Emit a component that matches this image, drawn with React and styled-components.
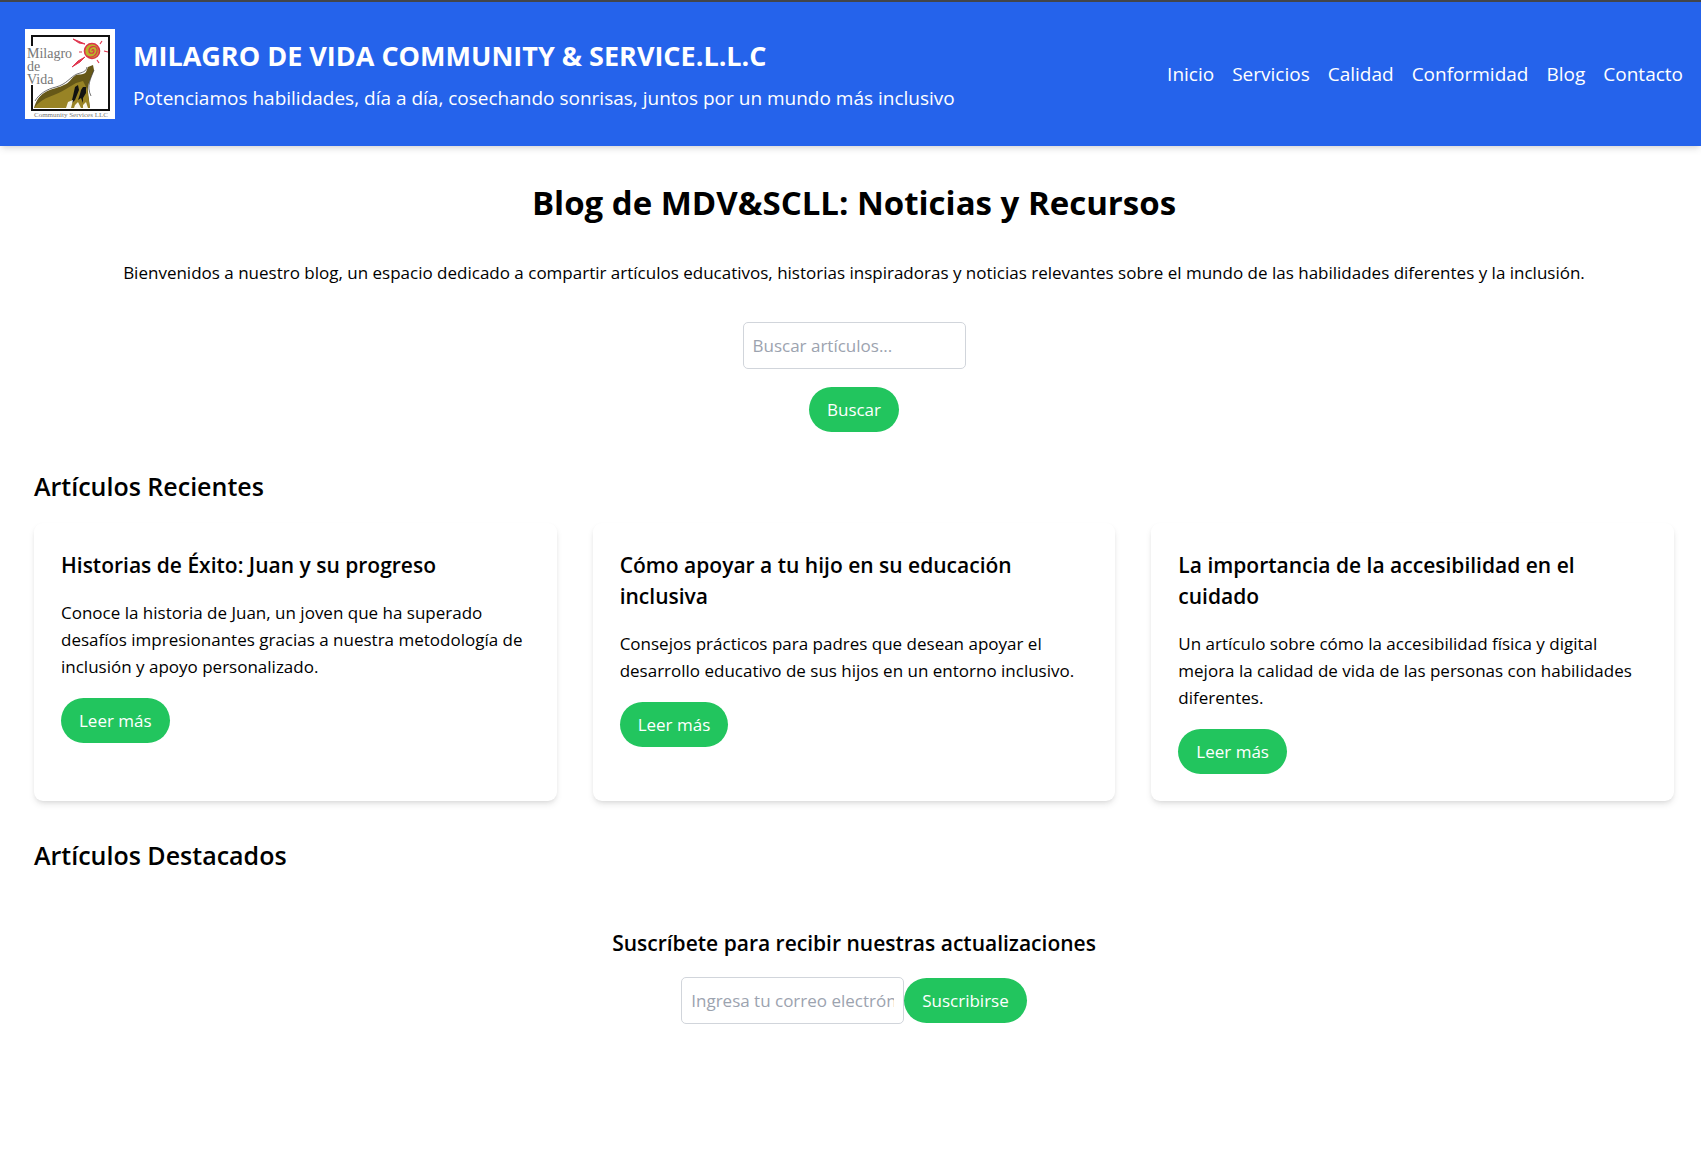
import React from "react";
import styled, { createGlobalStyle } from "styled-components";

const GlobalStyle = createGlobalStyle`
  *, *::before, *::after { box-sizing: border-box; }
  body {
    margin: 0;
    background: #fff;
    color: #000;
    font-family: "Open Sans", "Noto Sans", sans-serif;
    font-size: 17px;
    line-height: 27px;
  }
  h1, h2, h3, p, ul { margin: 0; padding: 0; }
  button, input { font: inherit; }
`;

const Header = styled.header`
  display: flex;
  align-items: center;
  justify-content: space-between;
  gap: 36px;
  padding: 27px 18px 27px 25px;
  border-top: 2px solid #424549;
  background: #2563eb;
  color: #fff;
  box-shadow: 0 4px 7px -1px rgba(0, 0, 0, 0.1), 0 2px 5px -2px rgba(0, 0, 0, 0.1);
`;

const Brand = styled.div`
  display: flex;
  align-items: center;
  gap: 18px;
`;

const Logo = styled.svg`
  flex: none;
  width: 90px;
  height: 90px;
  background: #fff;
`;

const BrandText = styled.div`
  display: grid;
  gap: 9px;
  padding-top: 2px;
`;

const BrandName = styled.h1`
  font-size: 27px;
  font-weight: 700;
  line-height: 37px;
`;

const Slogan = styled.p`
  font-size: 19px;
  line-height: 31px;
`;

const NavList = styled.ul`
  display: flex;
  gap: 18px;
  list-style: none;
`;

const NavLink = styled.a`
  color: inherit;
  font-size: 19px;
  line-height: 31px;
  text-decoration: none;
`;

const Main = styled.main`
  display: grid;
  gap: 36px;
  padding: 36px 27px 36px 34px;
`;

const PageTitle = styled.h2`
  font-size: 33px;
  font-weight: 700;
  line-height: 41px;
  text-align: center;
`;

const Intro = styled.p`
  text-align: center;
`;

const SearchForm = styled.form`
  display: flex;
  flex-direction: column;
  align-items: center;
  gap: 18px;
`;

const Field = styled.input`
  width: 223px;
  height: 47px;
  padding: 9px;
  border: 1px solid #d1d5db;
  border-radius: 5px;
  background: #fff;
  color: #000;
  &::placeholder { color: #9ca3af; opacity: 1; }
`;

const PillButton = styled.button`
  padding: 9px 18px;
  border: 0;
  border-radius: 23px;
  background: #22c55e;
  color: #fff;
  cursor: pointer;
`;

const Section = styled.section`
  display: grid;
  gap: 18px;
`;

const SectionTitle = styled.h2`
  font-size: 25px;
  font-weight: 600;
  line-height: 37px;
`;

const Cards = styled.div`
  display: grid;
  grid-template-columns: repeat(3, minmax(0, 1fr));
  gap: 36px;
`;

const Card = styled.article`
  display: flex;
  flex-direction: column;
  align-items: flex-start;
  gap: 18px;
  padding: 27px;
  border-radius: 9px;
  background: #fff;
  box-shadow: 0 4px 7px -1px rgba(0, 0, 0, 0.1), 0 2px 5px -2px rgba(0, 0, 0, 0.1);
`;

const Subtitle = styled.h3`
  font-size: 21px;
  font-weight: 600;
  line-height: 31px;
`;

const Subscribe = styled.section`
  display: flex;
  flex-direction: column;
  align-items: center;
  gap: 18px;
  padding-top: 18px;
`;

const SubscribeForm = styled.form`
  display: flex;
  align-items: center;
`;

const links = ["Inicio", "Servicios", "Calidad", "Conformidad", "Blog", "Contacto"];

const articles = [
  {
    title: "Historias de Éxito: Juan y su progreso",
    text: "Conoce la historia de Juan, un joven que ha superado desafíos impresionantes gracias a nuestra metodología de inclusión y apoyo personalizado.",
  },
  {
    title: "Cómo apoyar a tu hijo en su educación inclusiva",
    text: "Consejos prácticos para padres que desean apoyar el desarrollo educativo de sus hijos en un entorno inclusivo.",
  },
  {
    title: "La importancia de la accesibilidad en el cuidado",
    text: "Un artículo sobre cómo la accesibilidad física y digital mejora la calidad de vida de las personas con habilidades diferentes.",
  },
];

function BrandLogo() {
  return (
    <Logo viewBox="0 0 90 90" role="img" aria-label="Milagro de Vida">
      <path d="M7 17V7H84V81H7V56" fill="none" stroke="#111" strokeWidth="2" />
      <g fill="#777" fontFamily="'Liberation Serif', serif" fontSize="14">
        <text x="2" y="29">Milagro</text>
        <text x="2" y="42">de</text>
        <text x="2" y="55">Vida</text>
      </g>
      <text x="9" y="88" fill="#777" fontFamily="'Liberation Serif', serif" fontSize="7">Community Services LLC</text>
      <path d="M48 10L54 14L60 15L53 12ZM47 38L53 32L60 28L55 33Z" fill="#e0364f" stroke="#e0364f" strokeWidth="1" />
      <path d="M54 23L57 23M77 12L75 15M79 22L83 23M72 31L74 34" fill="none" stroke="#e0364f" strokeWidth="1.2" />
      <circle cx="67" cy="22" r="7.5" fill="#b9b52b" stroke="#dc3348" strokeWidth="1.6" />
      <path d="M62 27C67 30 73 26 72 20C71 16 64 17 64 22C64 25 69 25 69 22C69 20 67 20 67 22" fill="none" stroke="#dc3348" strokeWidth="1.2" />
      <path d="M9 79C11 72 14 67 19 64C27 59 34 59 41 55C46 52 46 49 51 46C55 45 59 46 61 43L63 38L68 36L69 41C66 49 62 56 63 63L65 79Z" fill="#665818" />
      <path d="M9 79C18 67 31 67 41 60L51 54L58 52L62 60L65 79Z" fill="#988325" />
      <path d="M10 72C14 65 22 60 31 58C42 55 45 48 52 45C58 43 61 43 62 38M69 41C66 49 61 57 66 67" fill="none" stroke="#333" strokeWidth=".7" />
      <path d="M50 58L53 56L54 61L52 66L50 71L46 75L48 67ZM56 61L58 58L61 58L61 64L58 69L58 74L56 69L53 71L55 65Z" fill="#111" />
      <path d="M43 73L48 71L46 79H41ZM50 76L53 73L56 79H49ZM58 76L61 73L63 79H58Z" fill="#f6f4e6" />
    </Logo>
  );
}

export default function App() {
  const stay = (event) => event.preventDefault();
  return (
    <>
      <GlobalStyle />
      <Header>
        <Brand>
          <BrandLogo />
          <BrandText>
            <BrandName>MILAGRO DE VIDA COMMUNITY &amp; SERVICE.L.L.C</BrandName>
            <Slogan>Potenciamos habilidades, día a día, cosechando sonrisas, juntos por un mundo más inclusivo</Slogan>
          </BrandText>
        </Brand>
        <nav>
          <NavList>
            {links.map((name) => (
              <li key={name}>
                <NavLink href={`#${name.toLowerCase()}`}>{name}</NavLink>
              </li>
            ))}
          </NavList>
        </nav>
      </Header>
      <Main>
        <PageTitle>Blog de MDV&amp;SCLL: Noticias y Recursos</PageTitle>
        <Intro>
          Bienvenidos a nuestro blog, un espacio dedicado a compartir artículos educativos, historias inspiradoras y
          noticias relevantes sobre el mundo de las habilidades diferentes y la inclusión.
        </Intro>
        <SearchForm onSubmit={stay}>
          <Field type="text" aria-label="Buscar artículos" placeholder="Buscar artículos..." />
          <PillButton type="submit">Buscar</PillButton>
        </SearchForm>
        <Section>
          <SectionTitle>Artículos Recientes</SectionTitle>
          <Cards>
            {articles.map((article) => (
              <Card key={article.title}>
                <Subtitle>{article.title}</Subtitle>
                <p>{article.text}</p>
                <PillButton type="button">Leer más</PillButton>
              </Card>
            ))}
          </Cards>
        </Section>
        <SectionTitle>Artículos Destacados</SectionTitle>
        <Subscribe>
          <Subtitle>Suscríbete para recibir nuestras actualizaciones</Subtitle>
          <SubscribeForm onSubmit={stay}>
            <Field type="email" aria-label="Correo electrónico" placeholder="Ingresa tu correo electrónico" />
            <PillButton type="submit">Suscribirse</PillButton>
          </SubscribeForm>
        </Subscribe>
      </Main>
    </>
  );
}
